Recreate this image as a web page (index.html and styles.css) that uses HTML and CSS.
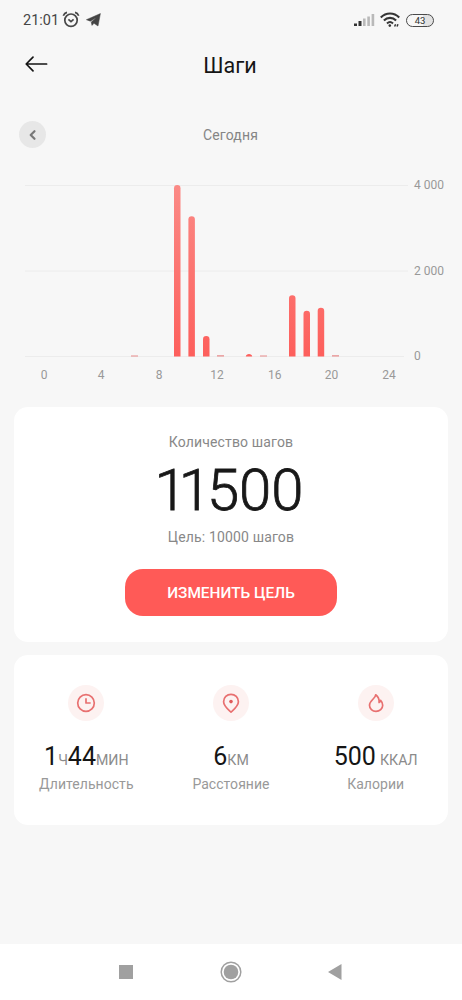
FILE: index.html
```
<!DOCTYPE html>
<html lang="ru">
<head>
<meta charset="utf-8">
<title>Шаги</title>
<link rel="stylesheet" href="styles.css">
</head>
<body>
<div class="phone">
  <header class="status">
    <span class="clock">21:01</span>
    <svg class="alarm" width="18" height="18" viewBox="0 0 18 18" fill="none" stroke="#484848"><circle cx="9" cy="9.2" r="6.2" stroke-width="1.7"/><path d="M6.4 8.3 9 10.6 11.6 8.3" stroke-width="1.7"/><path d="M1.3 4.7C2 3 3.4 1.8 5 1.4M16.7 4.7C16 3 14.6 1.8 13 1.4" stroke-width="1.7"/></svg>
    <svg class="plane" width="15" height="14" viewBox="0 0 15 14"><path d="M.4 6.7 14.4.6 12 13 8 10.3 6 12.4 5.2 9.1 10.6 4.6 4.3 8.2Z" fill="#444" stroke="#444" stroke-width=".5"/></svg>
    <svg class="signal" width="21" height="14" viewBox="0 0 21 14"><path d="M0 10.5h3V13H0zM4.5 8h3v5h-3z" fill="#333"/><path d="M9 5.5h2.6V13H9zM13.3 3.5h2.6V13h-2.6zM17.6 1h2.6v12h-2.6z" fill="#b9b9b9"/></svg>
    <svg class="wifi" width="20" height="16" viewBox="0 0 20 16" fill="none" stroke="#353535" stroke-width="2.1"><path d="M.8 5.6C6 .2 14 .2 19.2 5.6M3.9 8.6c3.5-3.6 8.7-3.6 12.2 0M7 11.4c1.8-1.7 4.2-1.7 6 0"/><circle cx="9.8" cy="13.6" r="1.3" fill="#353535" stroke="none"/><path d="M14.6 14.5l1-2.2M17 14.5l1-2.2" stroke-width="1.5"/></svg>
    <span class="battery">43</span>
  </header>

  <nav class="topbar">
    <svg width="24" height="18" viewBox="0 0 24 18" fill="none" stroke="#151515" stroke-width="1.7" stroke-linecap="round" stroke-linejoin="round"><path d="M22.6 9H2.5M9 2.2 2.2 9 9 15.8"/></svg>
    <h1>Шаги</h1>
  </nav>

  <div class="day">
    <button class="prev" aria-label="Назад"><svg width="10" height="12" viewBox="0 0 10 12" fill="none" stroke="#777" stroke-width="2.2" stroke-linecap="round" stroke-linejoin="round"><path d="M6.5 2.2 2.7 6l3.8 3.8"/></svg></button>
    <span>Сегодня</span>
  </div>

  <svg class="chart" width="462" height="230" viewBox="0 165 462 230">
    <defs><linearGradient id="bar" gradientUnits="userSpaceOnUse" x1="0" y1="185" x2="0" y2="356"><stop offset="0" stop-color="#fb8a86"/><stop offset="1" stop-color="#fd5f5c"/></linearGradient></defs>
    <path class="grid" d="M25 185.5H408M25 271H408M25 356.5H404"/>
    <g fill="url(#bar)">
      <path d="M174 356.5V188.3a3.25 3.25 0 0 1 6.5 0V356.5z"/>
      <path d="M188.4 356.5V219.6a3.25 3.25 0 0 1 6.5 0V356.5z"/>
      <path d="M203 356.5V339.2a3.25 3.25 0 0 1 6.5 0V356.5z"/>
      <path d="M289 356.5V298.6a3.25 3.25 0 0 1 6.5 0V356.5z"/>
      <path d="M303.5 356.5V314.1a3.25 3.25 0 0 1 6.5 0V356.5z"/>
      <path d="M317.7 356.5V311.1a3.25 3.25 0 0 1 6.5 0V356.5z"/>
      <path d="M245.8 356.5c0-3.4 6.4-3.4 6.4 0z"/>
    </g>
    <path class="trace" d="M131 356h7M217 355.8h7M260 356h7M332 355.8h7"/>
    <g class="axis">
      <text x="414" y="189.4">4 000</text><text x="414" y="275">2 000</text><text x="414" y="360.4">0</text>
      <g text-anchor="middle"><text x="44" y="379.3">0</text><text x="101" y="379.3">4</text><text x="159" y="379.3">8</text><text x="217" y="379.3">12</text><text x="274.7" y="379.3">16</text><text x="331.5" y="379.3">20</text><text x="389" y="379.3">24</text></g>
    </g>
  </svg>

  <section class="card goal">
    <p class="caption">Количество шагов</p>
    <p class="total"><span class="ones">11</span>500</p>
    <p class="caption">Цель: 10000 шагов</p>
    <button class="change">ИЗМЕНИТЬ ЦЕЛЬ</button>
  </section>

  <section class="card stats">
    <div class="stat">
      <span class="icon"><svg width="22" height="22" viewBox="0 0 22 22"><circle cx="11" cy="11" r="8.3"/><path d="M11 6.3V11h4.7"/></svg></span>
      <p class="value">1<small>Ч</small>44<small>МИН</small></p>
      <p class="label">Длительность</p>
    </div>
    <div class="stat">
      <span class="icon"><svg width="22" height="22" viewBox="0 0 22 22"><path d="M11 20.1C8 17.3 3.6 13.9 3.6 9.7a7.4 7.4 0 0 1 14.8 0c0 4.2-4.4 7.6-7.4 10.4z"/><circle class="dot" cx="11" cy="9.6" r="1.8"/></svg></span>
      <p class="value">6<small>КМ</small></p>
      <p class="label">Расстояние</p>
    </div>
    <div class="stat">
      <span class="icon"><svg width="22" height="22" viewBox="0 0 22 22"><path d="M10.7 2.8C10.6 6.6 4.5 8.3 4.5 13.3c0 3.5 2.9 6.1 6.5 6.1s6.7-2.5 6.7-6.1c0-2-.9-3.7-2.1-4.9-.2 1.1-.7 1.8-1.5 2.1.3-3.2-1.1-6-3.4-7.7z"/></svg></span>
      <p class="value">500<small class="apart">ККАЛ</small></p>
      <p class="label">Калории</p>
    </div>
  </section>

  <footer class="system">
    <svg width="14" height="22" viewBox="0 0 14 22"><path d="M0 4h14v14H0z" fill="#a0a0a0"/></svg>
    <svg width="22" height="22" viewBox="0 0 22 22"><circle cx="11" cy="11" r="7.3" fill="#a0a0a0"/><circle cx="11" cy="11" r="9.8" fill="none" stroke="#a0a0a0" stroke-width="1.5"/></svg>
    <svg width="14" height="22" viewBox="0 0 14 22"><path d="M13.5 3v16L0 11z" fill="#a0a0a0"/></svg>
  </footer>
</div>
</body>
</html>
```
FILE: styles.css
```
* { box-sizing: border-box; }
body { margin: 0; background: #f7f7f7; font-family: Roboto, "Noto Sans", sans-serif; }
p, h1 { margin: 0; }
button { border: 0; padding: 0; font-family: inherit; }
svg { display: block; flex: none; }
.phone { width: 462px; height: 1000px; display: flex; flex-direction: column; overflow: hidden; }

.status { height: 40px; padding: 0 28px 0 23px; display: flex; align-items: center; }
.clock { width: 36px; font-size: 14.5px; color: #454545; white-space: nowrap; }
.alarm { margin-left: 3px; }
.plane { margin-left: 6px; }
.signal { margin-left: auto; }
.wifi { margin-left: 5px; }
.battery { width: 28px; height: 13px; margin-left: 6px; border: 1.5px solid #4a4a4a; border-radius: 7px; background: linear-gradient(90deg, #f7f7f7 60%, #e2e2e2 60%); font-size: 9.5px; line-height: 11px; text-align: center; color: #333; }

.topbar { height: 48px; padding: 0 24px; display: grid; grid-template-columns: 24px 1fr 24px; align-items: center; }
.topbar h1 { padding: 2px 2px 0 0; text-align: center; font-size: 21.5px; font-weight: 400; color: #151515; }

.day { height: 27px; margin-top: 33px; padding: 0 19px; display: grid; grid-template-columns: 28px 1fr 29px; align-items: center; text-align: center; font-size: 14px; letter-spacing: 0.15px; color: #858585; }
.prev { width: 27px; height: 27px; border-radius: 50%; background: #e7e7e7; display: grid; place-items: center; }

.chart { margin-top: 17px; }
.grid { stroke: #ececec; stroke-width: 1; }
.trace { stroke: #e88c8c; stroke-width: 1.2; }
.axis { font-size: 12px; fill: #999; }

.card { margin: 0 14px; background: #fff; border-radius: 14px; }
.goal { height: 235px; margin-top: 12px; padding-top: 26px; display: flex; flex-direction: column; align-items: center; }
.caption { font-size: 14px; line-height: 18px; letter-spacing: 0.15px; color: #888; }
.total { height: 77px; margin-right: 4px; line-height: 79px; font-size: 58px; font-weight: 300; color: #181818; -webkit-text-stroke: 0.8px #181818; }
.ones { margin-right: 4px; letter-spacing: -8px; }
.change { width: 212px; height: 47px; margin-top: 23px; border-radius: 18px; background: #ff5a57; color: #fff; font-size: 15.4px; font-weight: 500; }

.stats { height: 170px; margin-top: 13px; padding-top: 30px; display: grid; grid-template-columns: repeat(3, 1fr); }
.stat { display: flex; flex-direction: column; align-items: center; }
.icon { width: 36px; height: 36px; border-radius: 50%; background: #fdf2f1; display: grid; place-items: center; }
.icon svg { fill: none; stroke: #e87070; stroke-width: 1.7; stroke-linejoin: round; }
.icon .dot { fill: #e05a5a; stroke: none; }
.value { height: 30px; line-height: 30px; margin-top: 21px; font-size: 25px; color: #151515; white-space: nowrap; }
.value small { font-size: 14.2px; color: #8b8b8b; }
.value .apart { margin-left: 4px; }
.label { margin-top: 3px; font-size: 14px; line-height: 18px; letter-spacing: 0.05px; color: #999; }

.system { height: 56px; margin-top: auto; padding: 0 120px 0 119px; background: #fff; display: flex; justify-content: space-between; align-items: center; }
```
